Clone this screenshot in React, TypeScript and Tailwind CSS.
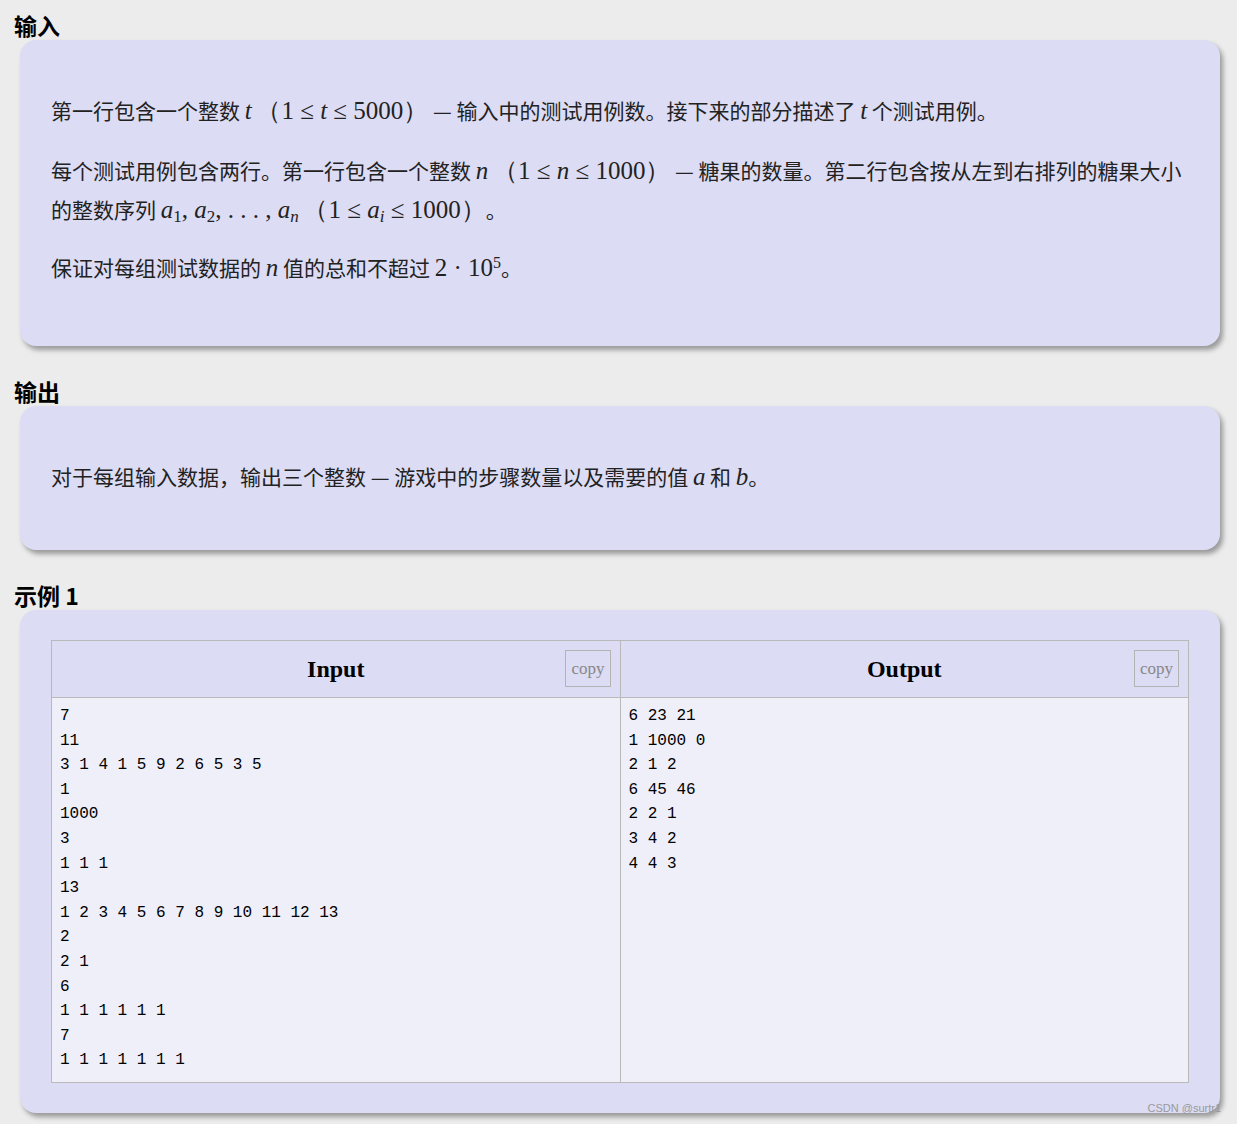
const INPUT = `7
11
3 1 4 1 5 9 2 6 5 3 5
1
1000
3
1 1 1
13
1 2 3 4 5 6 7 8 9 10 11 12 13
2
2 1
6
1 1 1 1 1 1
7
1 1 1 1 1 1 1`

const OUTPUT = `6 23 21
1 1000 0
2 1 2
6 45 46
2 2 1
3 4 2
4 4 3`

const V = ({ children }: { children: React.ReactNode }) => (
  <span className="italic font-[family-name:Liberation_Serif] text-[25px]">{children}</span>
)
const M = ({ children }: { children: React.ReactNode }) => (
  <span className="font-[family-name:Liberation_Serif] text-[25px]">{children}</span>
)
const Sub = ({ children, it = false }: { children: React.ReactNode; it?: boolean }) => (
  <sub className={`font-[family-name:Liberation_Serif] text-[17px] ${it ? 'italic' : ''}`}>{children}</sub>
)

const Heading = ({ children }: { children: React.ReactNode }) => (
  <h2 className="pl-[14px] text-[23px] font-bold text-black leading-none">{children}</h2>
)

const Card = ({ children, className = '' }: { children: React.ReactNode; className?: string }) => (
  <div className={`ml-5 w-[1200px] rounded-2xl bg-[#dcdcf4] shadow-[3px_4px_5px_rgba(0,0,0,0.35)] ${className}`}>
    {children}
  </div>
)

function Sample({ title, text }: { title: string; text: string }) {
  return (
    <div className="flex flex-1 flex-col">
      <div className="relative flex h-[57px] items-center justify-center border-b border-[#b9b9b9] bg-[#dcdcf4]">
        <span className="font-[family-name:Liberation_Serif] text-[24px] font-bold text-black">{title}</span>
        <span className="absolute right-[9px] top-[9px] border border-[#b4b4b4] px-[5px] py-[9px] font-[family-name:Liberation_Serif] text-[17px] leading-none text-[#888]">
          copy
        </span>
      </div>
      <pre className="flex-1 bg-[#efeffa] px-2 pt-[6px] font-[family-name:Liberation_Mono] text-[16px] leading-[24.6px] text-black">
        {text}
      </pre>
    </div>
  )
}

export default function App() {
  return (
    <div className="relative min-h-[1124px] w-[1237px] bg-[#ececec] pt-[14px] font-[family-name:Noto_Sans_CJK_SC] text-[21px] text-[#222]">
      <Heading>输入</Heading>
      <Card className="mt-[3px] h-[306px] px-[31px] pt-[52px]">
        <p className="leading-[36px]">
          第一行包含一个整数 <V>t</V> <M>（1 ≤ </M><V>t</V><M> ≤ 5000）</M> — 输入中的测试用例数。接下来的部分描述了 <V>t</V> 个测试用例。
        </p>
        <p className="mt-[22px] leading-[39px]">
          每个测试用例包含两行。第一行包含一个整数 <V>n</V> <M>（1 ≤ </M><V>n</V><M> ≤ 1000）</M> — 糖果的数量。第二行包含按从左到右排列的糖果大小的整数序列 <V>a</V><Sub>1</Sub><M>, </M><V>a</V><Sub>2</Sub><M>, . . . , </M><V>a</V><Sub it>n</Sub> <M>（1 ≤ </M><V>a</V><Sub it>i</Sub><M> ≤ 1000）</M>。
        </p>
        <p className="mt-[20px] leading-[36px]">
          保证对每组测试数据的 <V>n</V> 值的总和不超过 <M>2 · 10</M><sup className="font-[family-name:Liberation_Serif] text-[16px]">5</sup>。
        </p>
      </Card>
      <div className="mt-[34px]">
        <Heading>输出</Heading>
      </div>
      <Card className="mt-[3px] h-[144px] px-[31px] pt-[52px]">
        <p className="leading-[36px]">
          对于每组输入数据，输出三个整数 — 游戏中的步骤数量以及需要的值 <V>a</V> 和 <V>b</V>。
        </p>
      </Card>
      <div className="mt-[34px]">
        <Heading>示例 1</Heading>
      </div>
      <Card className="mt-[3px] h-[503px] px-[31px] pt-[30px]">
        <div className="flex h-[443px] w-[1138px] border border-[#b9b9b9]">
          <Sample title="Input" text={INPUT} />
          <div className="w-px bg-[#b9b9b9]" />
          <Sample title="Output" text={OUTPUT} />
        </div>
      </Card>
      <span className="absolute bottom-[8px] right-[16px] font-[family-name:Liberation_Sans] text-[11px] text-[#999]">
        CSDN @surtr1
      </span>
    </div>
  )
}
